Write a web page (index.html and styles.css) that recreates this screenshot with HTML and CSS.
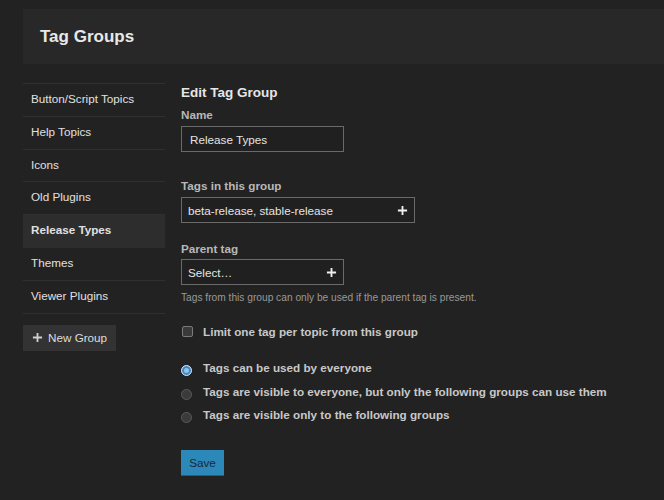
FILE: index.html
```html
<!DOCTYPE html>
<html>
<head>
<meta charset="utf-8">
<link rel="stylesheet" href="styles.css">
</head>
<body>
<div class="page">
  <div class="header"><h1>Tag Groups</h1></div>
  <div class="layout">
    <div class="sidebar">
      <ul class="nav">
        <li>Button/Script Topics</li>
        <li>Help Topics</li>
        <li>Icons</li>
        <li>Old Plugins</li>
        <li class="active">Release Types</li>
        <li>Themes</li>
        <li>Viewer Plugins</li>
      </ul>
      <button class="new-group"><svg class="plus" viewBox="0 0 12 12" width="11" height="11"><path d="M6 1v10M1 6h10" stroke="currentColor" stroke-width="2"/></svg>New Group</button>
    </div>
    <div class="main">
      <h2>Edit Tag Group</h2>
      <div class="field">
        <div class="label">Name</div>
        <div class="input name-input">Release Types</div>
      </div>
      <div class="field gap">
        <div class="label">Tags in this group</div>
        <div class="input tags-input"><span class="val">beta-release, stable-release</span><svg class="plus" viewBox="0 0 12 12" width="11" height="11"><path d="M6 1v10M1 6h10" stroke="currentColor" stroke-width="2"/></svg></div>
      </div>
      <div class="field gap2">
        <div class="label">Parent tag</div>
        <div class="input select-input"><span class="val">Select…</span><svg class="plus" viewBox="0 0 12 12" width="11" height="11"><path d="M6 1v10M1 6h10" stroke="currentColor" stroke-width="2"/></svg></div>
        <div class="help">Tags from this group can only be used if the parent tag is present.</div>
      </div>
      <label class="check"><span class="box"></span>Limit one tag per topic from this group</label>
      <div class="radios">
        <label class="radio"><span class="dot checked"></span>Tags can be used by everyone</label>
        <label class="radio"><span class="dot"></span>Tags are visible to everyone, but only the following groups can use them</label>
        <label class="radio"><span class="dot"></span>Tags are visible only to the following groups</label>
      </div>
      <button class="save">Save</button>
    </div>
  </div>
</div>
</body>
</html>
```
FILE: styles.css
```css
html, body {
  margin: 0;
  padding: 0;
  background: #222222;
  color: #dddddd;
  font-family: "Liberation Sans", Arial, sans-serif;
  font-size: 11.7px;
}
.page {
  padding: 9px 0 0 23px;
}
.header {
  height: 55px;
  background: #282828;
  display: flex;
  align-items: center;
  padding-left: 17px;
}
.header h1 {
  margin: 0;
  font-size: 17px;
  font-weight: bold;
  color: #e8e8e8;
}
.layout {
  display: flex;
  gap: 16px;
  margin-top: 19px;
}
.sidebar {
  width: 142px;
  flex: none;
}
.nav {
  list-style: none;
  margin: 0;
  padding: 0;
  border-top: 1px solid #303030;
}
.nav li {
  height: 31.8px;
  line-height: 30.8px;
  padding-left: 8px;
  border-bottom: 1px solid #303030;
  color: #e0e0e0;
}
.nav li.active {
  background: #2d2d2d;
  font-weight: bold;
  border-bottom-color: #2d2d2d;
}
.new-group {
  margin-top: 11px;
  height: 26px;
  width: 93px;
  background: #333333;
  border: none;
  color: #dddddd;
  font-family: inherit;
  font-size: 11.7px;
  display: flex;
  align-items: center;
  padding: 0 0 0 9px;
  gap: 5px;
}
.new-group .plus {
  color: #cfcfcf;
}
.main {
  flex: 1;
  padding-top: 1px;
}
.main h2 {
  margin: 0;
  font-size: 13.5px;
  line-height: 18px;
  color: #e6e6e6;
}
.label {
  font-weight: bold;
  color: #b8b8b8;
  line-height: 14px;
  margin-top: 6px;
  margin-bottom: 4px;
}
.input {
  box-sizing: border-box;
  border: 1px solid #6a6a6a;
  background: #202020;
  color: #e4e4e4;
  display: flex;
  align-items: center;
  justify-content: space-between;
}
.name-input {
  width: 163px;
  height: 26px;
  padding-left: 8px;
}
.field.gap {
  margin-top: 27px;
}
.field.gap2 {
  margin-top: 19px;
}
.field.gap2 .label {
  margin-bottom: 3px;
}
.tags-input {
  width: 234px;
  height: 26px;
  padding: 0 6px 0 6px;
}
.select-input {
  width: 163px;
  height: 26px;
  padding: 0 6px 0 6px;
}
.plus {
  color: #f0f0f0;
  flex: none;
}
.help {
  font-size: 10.2px;
  color: #999999;
  margin-top: 7px;
}
.check {
  display: flex;
  align-items: center;
  gap: 10px;
  margin-top: 22px;
  font-weight: bold;
  color: #c8c8c8;
  margin-left: 1px;
}
.box {
  width: 9px;
  height: 9px;
  border: 1px solid #7a7a7a;
  background: #3a3a3a;
  border-radius: 2px;
}
.radios {
  margin-top: 22px;
  display: flex;
  flex-direction: column;
  gap: 7.5px;
}
.radio {
  display: flex;
  align-items: center;
  gap: 11px;
  font-weight: bold;
  color: #c8c8c8;
  line-height: 14px;
}
.dot {
  width: 9px;
  height: 9px;
  border-radius: 50%;
  border: 1px solid #5a5a5a;
  background: #3a3a3a;
  margin-top: 5px;
}
.dot.checked {
  background: #8cc4f0;
  border-color: #c8e4ff;
  box-shadow: inset 0 0 0 2px #4a82b8;
}
.save {
  margin-top: 27px;
  width: 43px;
  height: 26px;
  background: #2b88b8;
  border: none;
  border-bottom: 1px solid #1f5f80;
  color: #1c2a33;
  font-family: inherit;
  font-size: 11.7px;
  padding: 0;
}
```
